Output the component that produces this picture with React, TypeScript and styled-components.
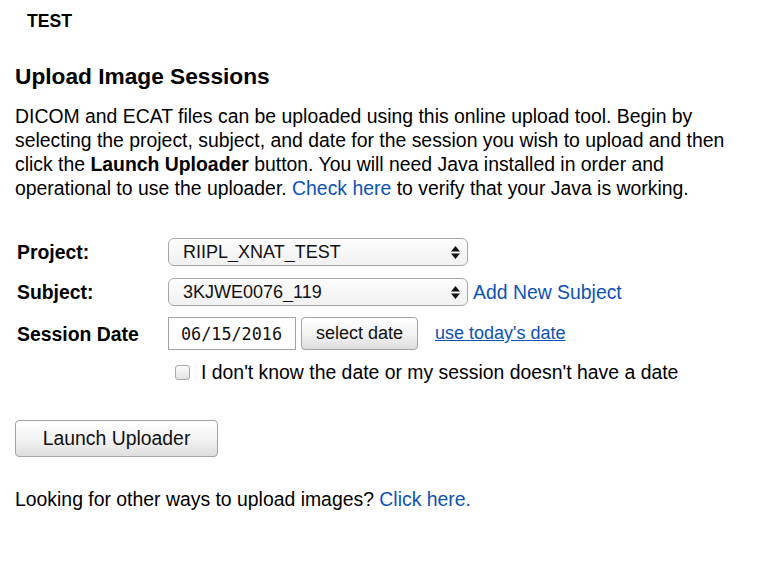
import React from 'react';
import styled, { createGlobalStyle } from 'styled-components';

/* Página de envio de sessões de imagem */

const Global = createGlobalStyle`
  html, body {
    margin: 0;
    padding: 0;
    background: #ffffff;
  }
  body {
    font-family: "Liberation Sans", Arial, Helvetica, sans-serif;
    color: #000;
  }
`;

const Page = styled.div`
  padding: 0 15px;
  width: 760px;
  box-sizing: border-box;
`;

const Header = styled.div`
  padding: 11px 0 0 12px;
  font-size: 17.6px;
  font-weight: 700;
  line-height: 20px;
`;

const Title = styled.h2`
  margin: 31px 0 0;
  font-size: 22.7px;
  font-weight: 700;
  line-height: 28px;
`;

const Intro = styled.p`
  margin: 14px 0 0;
  font-size: 19.4px;
  line-height: 24px;
`;

const Link = styled.a<{ $underline?: boolean; $size?: number }>`
  color: #0d52b4;
  text-decoration: ${p => (p.$underline ? 'underline' : 'none')};
  font-size: ${p => (p.$size ? `${p.$size}px` : 'inherit')};
  cursor: pointer;
`;

const Form = styled.div`
  margin-top: 38px;
  display: flex;
  flex-direction: column;
`;

const Row = styled.div<{ $h: number; $gap?: number }>`
  display: grid;
  grid-template-columns: 153px 1fr;
  align-items: center;
  height: ${p => p.$h}px;
  margin-top: ${p => p.$gap ?? 0}px;
`;

const Label = styled.div`
  padding-left: 2px;
  font-size: 19.4px;
  font-weight: 700;
  line-height: 24px;
`;

const Controls = styled.div<{ $gap?: number }>`
  display: flex;
  align-items: center;
  gap: ${p => p.$gap ?? 0}px;
`;

const SelectWrap = styled.div`
  position: relative;
  width: 300px;
  height: 28px;
`;

const Select = styled.select`
  appearance: none;
  -webkit-appearance: none;
  width: 100%;
  height: 100%;
  box-sizing: border-box;
  border: 1.5px solid #a6a6a6;
  border-radius: 6px;
  background: linear-gradient(#fdfdfd, #f1f1f1);
  padding: 0 30px 0 14px;
  font-family: "Liberation Sans", Arial, sans-serif;
  font-size: 18px;
  color: #111;
  outline: none;
`;

const Arrows = styled.svg`
  position: absolute;
  right: 8px;
  top: 8px;
  pointer-events: none;
`;

const DateInput = styled.input`
  width: 128px;
  height: 33px;
  box-sizing: border-box;
  border: 1.5px solid #a4a4a4;
  padding: 0 0 0 12px;
  font-family: "DejaVu Sans Mono", "Liberation Mono", monospace;
  font-size: 16.8px;
  color: #111;
  outline: none;
`;

const Button = styled.button<{ $w: number; $h: number; $size: number }>`
  width: ${p => p.$w}px;
  height: ${p => p.$h}px;
  box-sizing: border-box;
  border: 1.5px solid #a4a4a4;
  border-radius: 4px;
  background: linear-gradient(#ffffff 0%, #f4f4f4 50%, #dedede 100%);
  font-family: "Liberation Sans", Arial, sans-serif;
  font-size: ${p => p.$size}px;
  color: #111;
  padding: 0;
  cursor: pointer;
`;

const TodayLink = styled(Link)`
  margin-left: 12px;
`;

const CheckRow = styled.label`
  display: flex;
  align-items: center;
  gap: 11px;
  padding-left: 7px;
  font-size: 19.4px;
  line-height: 24px;
`;

const Check = styled.input`
  appearance: none;
  -webkit-appearance: none;
  margin: 0;
  width: 15px;
  height: 15px;
  border: 1px solid #a8a8a8;
  border-radius: 3px;
  background: linear-gradient(#fdfdfd, #e2e2e2);
`;

const LaunchArea = styled.div`
  margin-top: 38px;
`;

const Footer = styled.p`
  margin: 30px 0 0;
  font-size: 19.4px;
  line-height: 24px;
`;

const UpDown = () => (
  <Arrows width="9" height="13" viewBox="0 0 9 13">
    <path d="M4.5 0 L9 5.5 L0 5.5 Z" fill="#111" />
    <path d="M0 7.5 L9 7.5 L4.5 13 Z" fill="#111" />
  </Arrows>
);

export default function App() {
  return (
    <>
      <Global />
      <Page>
        <Header>TEST</Header>
        <Title>Upload Image Sessions</Title>
        <Intro>
          DICOM and ECAT files can be uploaded using this online upload tool. Begin by
          selecting the project, subject, and date for the session you wish to upload and then
          click the <b>Launch Uploader</b> button. You will need Java installed in order and
          operational to use the uploader. <Link>Check here</Link> to verify that your Java is working.
        </Intro>

        <Form>
          <Row $h={28}>
            <Label>Project:</Label>
            <Controls>
              <SelectWrap>
                <Select defaultValue="RIIPL_XNAT_TEST">
                  <option>RIIPL_XNAT_TEST</option>
                </Select>
                <UpDown />
              </SelectWrap>
            </Controls>
          </Row>
          <Row $h={28} $gap={12}>
            <Label>Subject:</Label>
            <Controls $gap={5}>
              <SelectWrap>
                <Select defaultValue="3KJWE0076_119">
                  <option>3KJWE0076_119</option>
                </Select>
                <UpDown />
              </SelectWrap>
              <Link $size={19.4}>Add New Subject</Link>
            </Controls>
          </Row>
          <Row $h={33} $gap={11}>
            <Label>Session Date</Label>
            <Controls $gap={5}>
              <DateInput defaultValue="06/15/2016" />
              <Button $w={117} $h={33} $size={18}>select date</Button>
              <TodayLink $underline $size={18}>use today's date</TodayLink>
            </Controls>
          </Row>
          <Row $h={22} $gap={10}>
            <span />
            <CheckRow>
              <Check type="checkbox" />
              I don't know the date or my session doesn't have a date
            </CheckRow>
          </Row>
        </Form>

        <LaunchArea>
          <Button $w={203} $h={37} $size={19.4}>Launch Uploader</Button>
        </LaunchArea>

        <Footer>
          Looking for other ways to upload images? <Link>Click here.</Link>
        </Footer>
      </Page>
    </>
  );
}
